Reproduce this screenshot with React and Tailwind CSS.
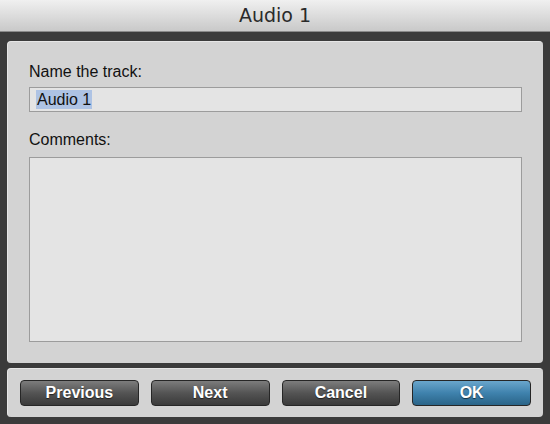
export default function App() {
  const btn =
    "flex-1 h-[26px] rounded-[4px] border border-[#262626] flex items-center justify-center text-white font-bold text-[16px] [text-shadow:0_1px_1px_rgba(0,0,0,0.6)]";
  return (
    <div
      className="w-[550px] h-[424px] bg-[#3b3b3b] flex flex-col overflow-hidden"
      style={{ fontFamily: '"Liberation Sans", Arial, sans-serif' }}
    >
      <div className="h-[32px] shrink-0 bg-gradient-to-b from-[#f0f0f0] to-[#c9c9c9] border-b border-[#8a8a8a] flex items-center justify-center">
        <span
          className="text-[19px] text-[#2a2a2a] leading-none"
          style={{ fontFamily: '"DejaVu Sans", Verdana, sans-serif' }}
        >
          Audio 1
        </span>
      </div>
      <div className="flex-1 flex flex-col px-[7px] pt-[9px] pb-[7px] gap-[5px]">
        <div className="h-[322px] bg-[#d3d3d3] rounded-[4px] border-t border-l border-[#e6e6e6] px-[21px] pt-[21px] flex flex-col">
          <div className="text-[16px] text-[#111] leading-[18px]">Name the track:</div>
          <div className="mt-[6px] h-[25px] bg-[#e4e4e4] border border-[#9c9c9c] flex items-center px-[6px]">
            <span className="bg-[#aec3e4] text-[16px] text-[#111] leading-[19px] px-[1px]">Audio 1</span>
          </div>
          <div className="mt-[19px] text-[16px] text-[#111] leading-[18px]">Comments:</div>
          <div className="mt-[8px] h-[185px] bg-[#e4e4e4] border border-[#9c9c9c]"></div>
        </div>
        <div className="h-[49px] bg-[#d3d3d3] rounded-[4px] border-t border-l border-[#e6e6e6] px-[12px] flex items-center gap-[12px]">
          <div className={btn + " bg-gradient-to-b from-[#7d7d7d] via-[#545454] to-[#3a3a3a]"}>Previous</div>
          <div className={btn + " bg-gradient-to-b from-[#7d7d7d] via-[#545454] to-[#3a3a3a]"}>Next</div>
          <div className={btn + " bg-gradient-to-b from-[#7d7d7d] via-[#545454] to-[#3a3a3a]"}>Cancel</div>
          <div className={btn + " border-[#1e4a66] bg-gradient-to-b from-[#6aa6cc] via-[#3f82ad] to-[#2a6488]"}>OK</div>
        </div>
      </div>
    </div>
  );
}
